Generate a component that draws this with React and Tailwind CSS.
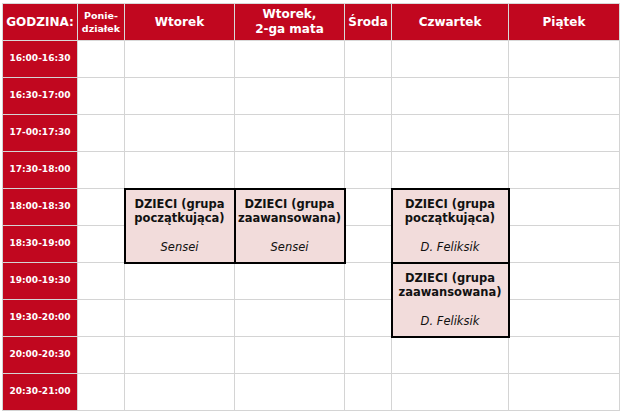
import React from "react";

const times = [
  "16:00-16:30",
  "16:30-17:00",
  "17-00:17:30",
  "17:30-18:00",
  "18:00-18:30",
  "18:30-19:00",
  "19:00-19:30",
  "19:30-20:00",
  "20:00-20:30",
  "20:30-21:00",
];

function Event({ title1, title2, who }) {
  return (
    <td
      rowSpan={2}
      className="border-2 border-black bg-[#f2dcdb] text-center align-middle p-0 text-[#111] text-[11.5px] leading-[14.5px]"
    >
      <div className="font-bold">{title1}</div>
      <div className="font-bold">{title2}</div>
      <div>&nbsp;</div>
      <div className="italic">{who}</div>
    </td>
  );
}

export default function App() {
  const cell = "border border-[#d4d4d4] p-0";
  const th = "border border-[#d9d9d9] bg-[#c1071f] text-white font-bold text-center align-middle p-0";
  return (
    <div className="bg-white w-[621px] h-[413px] pt-[3px] pl-[2px]" style={{ fontFamily: '"DejaVu Sans", Verdana, sans-serif' }}>
      <table className="border-collapse table-fixed w-[617px]">
        <colgroup>
          <col className="w-[75px]" />
          <col className="w-[47px]" />
          <col className="w-[110px]" />
          <col className="w-[110px]" />
          <col className="w-[47px]" />
          <col className="w-[117px]" />
          <col className="w-[111px]" />
        </colgroup>
        <thead>
          <tr className="h-[37px]">
            <th className={`${th} text-[12px]`}>GODZINA:</th>
            <th className={`${th} text-[9.5px] leading-[13px]`}>Ponie-<br />działek</th>
            <th className={`${th} text-[12px]`}>Wtorek</th>
            <th className={`${th} text-[12px] leading-[15px]`}>Wtorek,<br />2-ga mata</th>
            <th className={`${th} text-[12px]`}>Środa</th>
            <th className={`${th} text-[12px]`}>Czwartek</th>
            <th className={`${th} text-[12px]`}>Piątek</th>
          </tr>
        </thead>
        <tbody>
          {times.map((t, i) => (
            <tr key={t} className="h-[37px]">
              <td className="border border-[#d4d4d4] bg-[#c1071f] text-white font-bold text-[9px] text-center align-middle p-0">{t}</td>
              <td className={cell}></td>
              {i === 4 && <Event title1="DZIECI (grupa" title2="początkująca)" who="Sensei" />}
              {i === 4 && <Event title1="DZIECI (grupa" title2="zaawansowana)" who="Sensei" />}
              {i !== 4 && i !== 5 && <td className={cell}></td>}
              {i !== 4 && i !== 5 && <td className={cell}></td>}
              <td className={cell}></td>
              {i === 4 && <Event title1="DZIECI (grupa" title2="początkująca)" who="D. Feliksik" />}
              {i === 6 && <Event title1="DZIECI (grupa" title2="zaawansowana)" who="D. Feliksik" />}
              {i !== 4 && i !== 5 && i !== 6 && i !== 7 && <td className={cell}></td>}
              <td className={cell}></td>
            </tr>
          ))}
        </tbody>
      </table>
    </div>
  );
}
